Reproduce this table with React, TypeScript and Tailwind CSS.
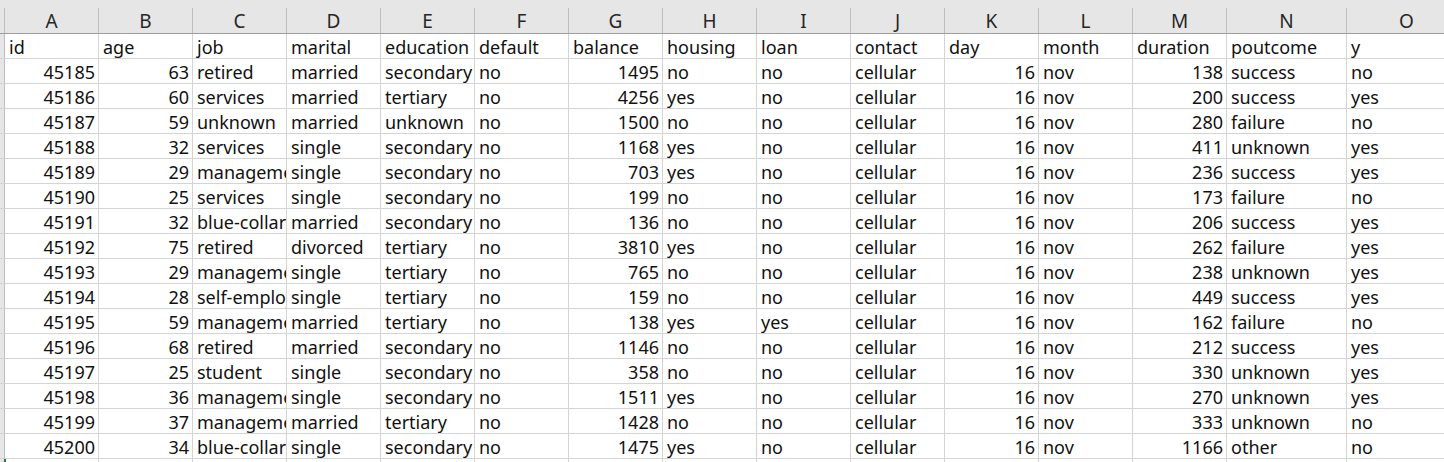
const cols = [
  { key: 'A', label: 'id', num: true },
  { key: 'B', label: 'age', num: true },
  { key: 'C', label: 'job' },
  { key: 'D', label: 'marital' },
  { key: 'E', label: 'education' },
  { key: 'F', label: 'default' },
  { key: 'G', label: 'balance', num: true },
  { key: 'H', label: 'housing' },
  { key: 'I', label: 'loan' },
  { key: 'J', label: 'contact' },
  { key: 'K', label: 'day', num: true },
  { key: 'L', label: 'month' },
  { key: 'M', label: 'duration', num: true },
  { key: 'N', label: 'poutcome' },
  { key: 'O', label: 'y' },
];

const widths = ['w-[94px]', 'w-[94px]', 'w-[94px]', 'w-[94px]', 'w-[94px]', 'w-[94px]', 'w-[94px]', 'w-[94px]', 'w-[94px]', 'w-[94px]', 'w-[94px]', 'w-[94px]', 'w-[94px]', 'w-[120px]', 'w-[120px]'];

const rows = [
  ['45185', '63', 'retired', 'married', 'secondary', 'no', '1495', 'no', 'no', 'cellular', '16', 'nov', '138', 'success', 'no'],
  ['45186', '60', 'services', 'married', 'tertiary', 'no', '4256', 'yes', 'no', 'cellular', '16', 'nov', '200', 'success', 'yes'],
  ['45187', '59', 'unknown', 'married', 'unknown', 'no', '1500', 'no', 'no', 'cellular', '16', 'nov', '280', 'failure', 'no'],
  ['45188', '32', 'services', 'single', 'secondary', 'no', '1168', 'yes', 'no', 'cellular', '16', 'nov', '411', 'unknown', 'yes'],
  ['45189', '29', 'management', 'single', 'secondary', 'no', '703', 'yes', 'no', 'cellular', '16', 'nov', '236', 'success', 'yes'],
  ['45190', '25', 'services', 'single', 'secondary', 'no', '199', 'no', 'no', 'cellular', '16', 'nov', '173', 'failure', 'no'],
  ['45191', '32', 'blue-collar', 'married', 'secondary', 'no', '136', 'no', 'no', 'cellular', '16', 'nov', '206', 'success', 'yes'],
  ['45192', '75', 'retired', 'divorced', 'tertiary', 'no', '3810', 'yes', 'no', 'cellular', '16', 'nov', '262', 'failure', 'yes'],
  ['45193', '29', 'management', 'single', 'tertiary', 'no', '765', 'no', 'no', 'cellular', '16', 'nov', '238', 'unknown', 'yes'],
  ['45194', '28', 'self-employed', 'single', 'tertiary', 'no', '159', 'no', 'no', 'cellular', '16', 'nov', '449', 'success', 'yes'],
  ['45195', '59', 'management', 'married', 'tertiary', 'no', '138', 'yes', 'yes', 'cellular', '16', 'nov', '162', 'failure', 'no'],
  ['45196', '68', 'retired', 'married', 'secondary', 'no', '1146', 'no', 'no', 'cellular', '16', 'nov', '212', 'success', 'yes'],
  ['45197', '25', 'student', 'single', 'secondary', 'no', '358', 'no', 'no', 'cellular', '16', 'nov', '330', 'unknown', 'yes'],
  ['45198', '36', 'management', 'single', 'secondary', 'no', '1511', 'yes', 'no', 'cellular', '16', 'nov', '270', 'unknown', 'yes'],
  ['45199', '37', 'management', 'married', 'tertiary', 'no', '1428', 'no', 'no', 'cellular', '16', 'nov', '333', 'unknown', 'no'],
  ['45200', '34', 'blue-collar', 'single', 'secondary', 'no', '1475', 'yes', 'no', 'cellular', '16', 'nov', '1166', 'other', 'no'],
];

// excel clips text at the cell edge when the neighbour isn't empty
function Cell({ text, num, w }: { text: string; num?: boolean; w: string }) {
  return (
    <div
      className={`${w} shrink-0 h-full border-r border-[#d4d4d4] overflow-hidden whitespace-nowrap flex items-center pt-[2px] ${
        num ? 'justify-end pr-[3px]' : 'pl-[4px]'
      }`}
    >
      {text}
    </div>
  );
}

export default function App() {
  return (
    <div className="w-[1444px] h-[462px] overflow-hidden bg-white text-[#111] font-['Noto_Sans',sans-serif] text-[18px] leading-none">
      {/* column letters */}
      <div className="h-[34px] bg-[#e6e6e6] flex flex-col">
        <div className="h-[8px]" />
        <div className="flex flex-1 border-b border-[#9e9e9e]">
          <div className="w-[5px] shrink-0 border-r border-[#bdbdbd]" />
          {cols.map((c, i) => (
            <div
              key={c.key}
              className={`${widths[i]} shrink-0 border-r border-[#bdbdbd] flex items-center justify-center text-[#262626] text-[19px] pt-[2px]`}
            >
              {c.key}
            </div>
          ))}
        </div>
      </div>

      {/* header row */}
      <div className="flex h-[25px] border-b border-[#d4d4d4]">
        <div className="w-[5px] shrink-0 bg-[#e6e6e6] border-r border-[#bdbdbd]" />
        {cols.map((c, i) => (
          <Cell key={c.key} text={c.label} w={widths[i]} />
        ))}
      </div>

      {/* data rows */}
      {rows.map(r => (
        <div key={r[0]} className="flex h-[25px] border-b border-[#d4d4d4]">
          <div className="w-[5px] shrink-0 bg-[#e6e6e6] border-r border-[#bdbdbd]" />
          {r.map((v, i) => (
            <Cell key={i} text={v} num={cols[i].num} w={widths[i]} />
          ))}
        </div>
      ))}

      <div className="flex h-[25px]">
        <div className="w-[5px] shrink-0 bg-[#e6e6e6] border-r border-[#bdbdbd] relative">
          <div className="absolute right-[-2px] top-0 w-[2px] h-[3px] bg-[#217346]" />
        </div>
        {cols.map((c, i) => (
          <Cell key={c.key} text="" w={widths[i]} />
        ))}
      </div>
    </div>
  );
}
